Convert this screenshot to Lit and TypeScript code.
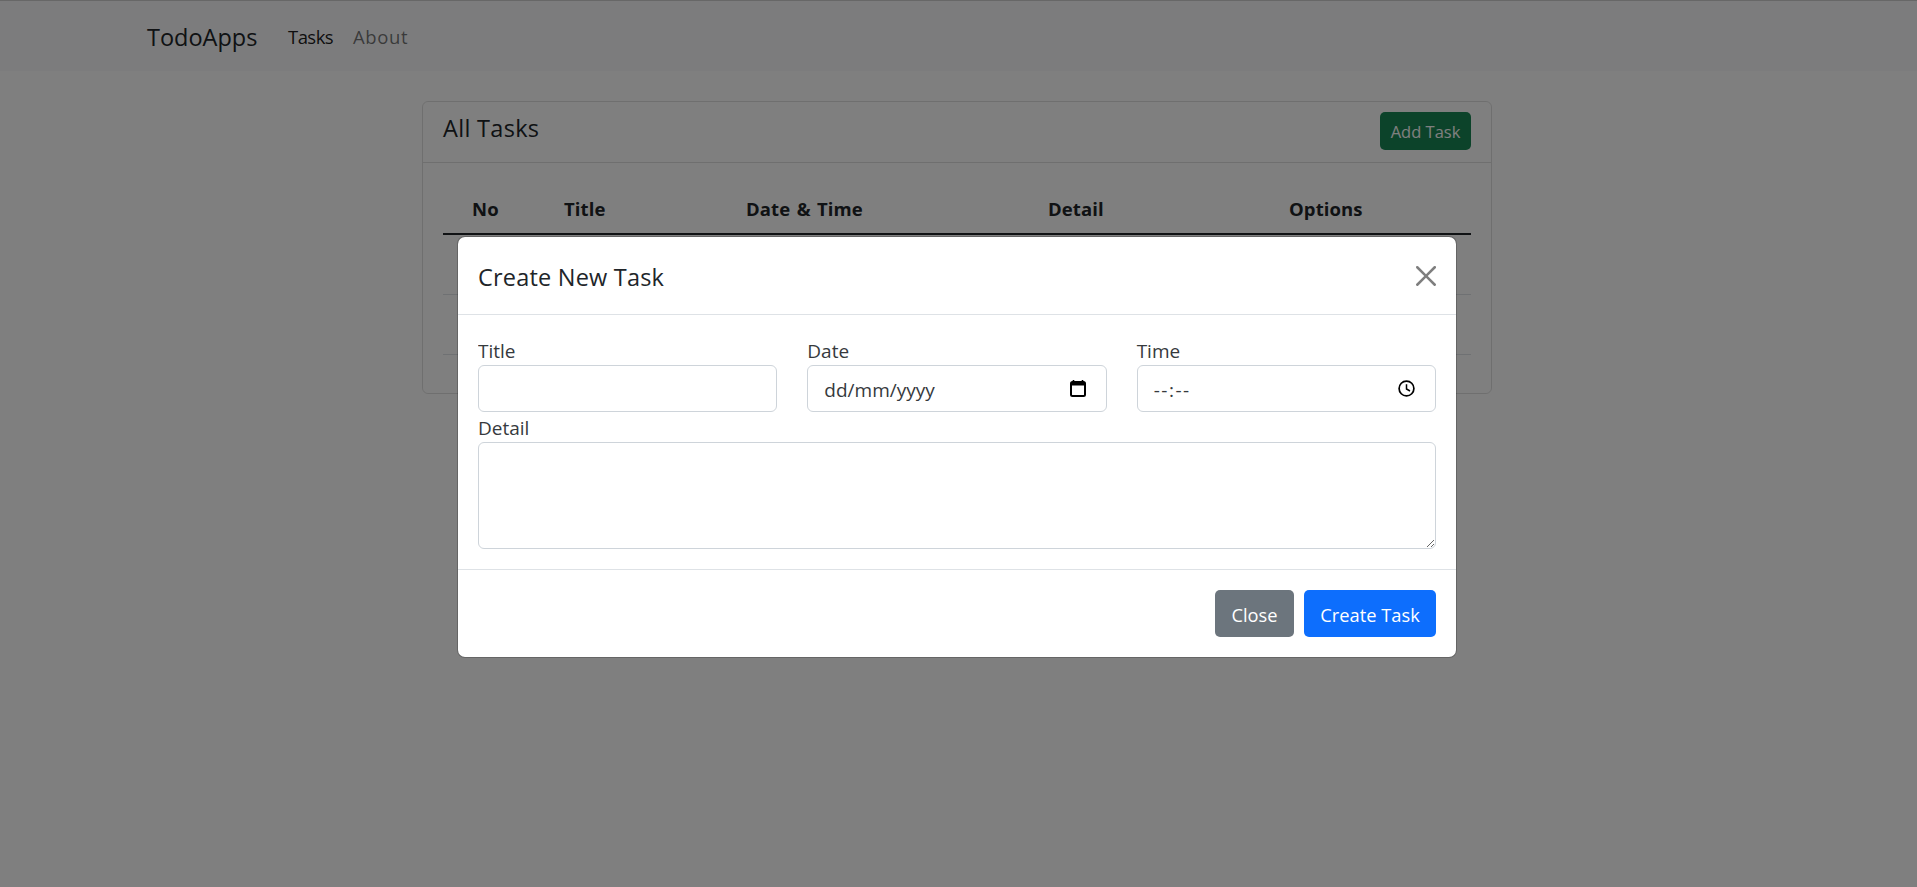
import { LitElement, html, css } from "lit";
import { customElement } from "lit/decorators.js";

@customElement("app-root")
export class AppRoot extends LitElement {
  static styles = css`
    :host { display: block; height: 887px; position: relative; overflow: hidden; background: #fff; color: #212529;
      font-family: "Open Sans", "Noto Sans", sans-serif; font-size: 19px; }
    * { box-sizing: border-box; }
    .topline { height: 1px; background: #cfcfcf; }
    .nav { height: 70px; background: #f8f9fa; display: flex; align-items: center; padding: 1px 0 0 147px; }
    .brand { font-size: 23.5px; width: 141px; }
    .link { font-size: 18.5px; color: rgba(0,0,0,.55); }
    .link.active { color: rgba(0,0,0,.9); letter-spacing: -.55px; width: 65px; }
    .link.about { letter-spacing: .6px; }
    .card { width: 1070px; height: 293px; margin: 30px 0 0 422px; border: 1px solid rgba(0,0,0,.125); border-radius: 6px; }
    .card-head { height: 61px; border-bottom: 1px solid rgba(0,0,0,.125);
      display: flex; justify-content: space-between; padding: 10px 20px 0 20px; }
    .card-title { font-size: 23.5px; letter-spacing: .3px; line-height: 36px; margin-top: -2px; }
    .btn { display: flex; align-items: center; justify-content: center; border-radius: 5px; color: #fff; }
    .btn-add { background: #198754; width: 91px; height: 38px; font-size: 16.5px; }
    .thead { display: grid; grid-template-columns: 92px 182px 302px 241px 1fr; margin: 20px 20px 0; padding: 1px 0 0 29px;
      height: 52px; align-items: center; border-bottom: 2px solid #212529; font-weight: 700; font-size: 18.5px;
      letter-spacing: .1px; word-spacing: 1.5px; }
    .row { height: 60px; margin: 0 20px; border-bottom: 1px solid #dee2e6; }
    .backdrop { position: absolute; inset: 0; background: rgba(0,0,0,.5); }
    .modal { position: absolute; left: 457px; top: 236px; width: 1000px; height: 422px; background: #fff; border-radius: 8px;
      border: 1px solid rgba(0,0,0,.2); background-clip: padding-box; display: flex; flex-direction: column; }
    .m-head { height: 78px; flex: none; border-bottom: 1px solid #dee2e6; display: flex; align-items: center;
      justify-content: space-between; padding: 0 20px; }
    .m-title { font-size: 23.5px; letter-spacing: .2px; padding-top: 2px; }
    .x { width: 20px; height: 20px; display: block; opacity: .5; }
    .m-body { flex: none; height: 255px; padding: 17px 20px 0; border-bottom: 1px solid #dee2e6; }
    .cols { display: grid; grid-template-columns: repeat(3, 1fr); column-gap: 30px; }
    label { display: block; font-size: 19px; line-height: 25px; height: 33px; opacity: .9; padding-top: 7px; }
    .control { width: 100%; height: 47px; border: 1px solid #ced4da; border-radius: 6px; background: #fff; font: inherit; color: #212529;
      display: flex; align-items: center; justify-content: space-between; padding: 0 20px 0 16px; outline: none; }
    .control span { padding-top: 3px; opacity: .9; }
    .dashes { letter-spacing: 1.5px; }
    .control svg { display: block; }
    textarea.control { display: block; height: 107px; margin: 0; }
    label.detail { margin-top: -2px; height: 32px; padding-top: 6px; }
    .m-foot { flex: 1; display: flex; justify-content: flex-end; gap: 10px; padding: 20px 20px 0; }
    .b { height: 47px; font-size: 18.3px; padding-top: 1px; }
    .close { width: 79px; background: #6c757d; }
    .create { width: 132px; background: #0d6efd; }
  `;

  render() {
    return html`
      <div class="topline"></div>
      <nav class="nav">
        <span class="brand">TodoApps</span>
        <span class="link active">Tasks</span>
        <span class="link about">About</span>
      </nav>
      <section class="card">
        <div class="card-head">
          <span class="card-title">All Tasks</span>
          <span class="btn btn-add">Add Task</span>
        </div>
        <div class="thead"><span>No</span><span>Title</span><span>Date &amp; Time</span><span>Detail</span><span>Options</span></div>
        <div class="row"></div>
        <div class="row"></div>
      </section>
      <div class="backdrop"></div>
      <div class="modal">
        <div class="m-head">
          <span class="m-title">Create New Task</span>
          <svg class="x" viewBox="0 0 16 16"><path d="M.293.293a1 1 0 0 1 1.414 0L8 6.586 14.293.293a1 1 0 1 1 1.414 1.414L9.414 8l6.293 6.293a1 1 0 0 1-1.414 1.414L8 9.414l-6.293 6.293a1 1 0 0 1-1.414-1.414L6.586 8 .293 1.707a1 1 0 0 1 0-1.414z" fill="#000"/></svg>
        </div>
        <div class="m-body">
          <div class="cols">
            <div><label>Title</label><input class="control" type="text" /></div>
            <div><label>Date</label>
              <div class="control"><span>dd/mm/yyyy</span>
                <svg width="16" height="17" viewBox="0 0 16 17"><path d="M3.5 0v2M12.5 0v2" stroke="#000" stroke-width="1.6"/><rect x="1" y="2" width="14" height="14" rx="1.5" fill="none" stroke="#000" stroke-width="2"/><rect x="1" y="2" width="14" height="3.5" fill="#000"/></svg>
              </div></div>
            <div><label>Time</label>
              <div class="control"><span class="dashes">--:--</span>
                <svg width="17" height="17" viewBox="0 0 17 17"><circle cx="8.5" cy="8.5" r="7.4" fill="none" stroke="#000" stroke-width="1.7"/><path d="M8.5 4.2V9L12 11" fill="none" stroke="#000" stroke-width="1.5"/></svg>
              </div></div>
          </div>
          <label class="detail">Detail</label>
          <textarea class="control"></textarea>
        </div>
        <div class="m-foot">
          <span class="btn b close">Close</span>
          <span class="btn b create">Create Task</span>
        </div>
      </div>
    `;
  }
}
